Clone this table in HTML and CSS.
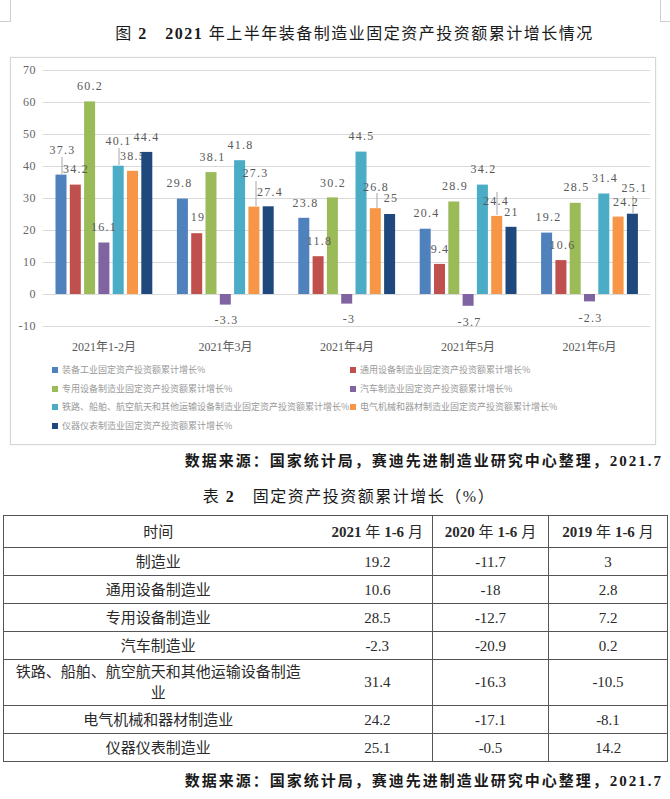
FILE: index.html
```html
<!DOCTYPE html>
<html lang="zh-CN">
<head>
<meta charset="utf-8">
<title>2021年上半年装备制造业固定资产投资额累计增长情况</title>
<link rel="stylesheet" href="styles.css">
</head>
<body>
<div class="marks"><span class="mark-l"></span><span class="mark-r"></span></div>
<h1 class="fig-title">图 <b>2</b>　<b>2021</b> 年上半年装备制造业固定资产投资额累计增长情况</h1>

<div class="chart">
<svg class="plot" width="644" height="300" viewBox="11 58 644 300" xmlns="http://www.w3.org/2000/svg">
  <g class="grid">
    <line x1="43" x2="650" y1="70.5" y2="70.5"/>
    <line x1="43" x2="650" y1="102.5" y2="102.5"/>
    <line x1="43" x2="650" y1="134.5" y2="134.5"/>
    <line x1="43" x2="650" y1="166.5" y2="166.5"/>
    <line x1="43" x2="650" y1="198.5" y2="198.5"/>
    <line x1="43" x2="650" y1="230.5" y2="230.5"/>
    <line x1="43" x2="650" y1="262.5" y2="262.5"/>
    <line x1="43" x2="650" y1="294.5" y2="294.5"/>
    <line x1="43" x2="650" y1="326.5" y2="326.5"/>
  </g>
  <g class="ylab">
    <text x="36" y="70">70</text>
    <text x="36" y="102">60</text>
    <text x="36" y="134">50</text>
    <text x="36" y="166">40</text>
    <text x="36" y="198">30</text>
    <text x="36" y="230">20</text>
    <text x="36" y="262">10</text>
    <text x="36" y="294">0</text>
    <text x="36" y="326">-10</text>
  </g>
  <g class="bars">
    <rect class="s1" x="55.5" y="174.6" width="11" height="119.4"/>
    <rect class="s2" x="69.8" y="184.6" width="11" height="109.4"/>
    <rect class="s3" x="84.1" y="101.4" width="11" height="192.6"/>
    <rect class="s4" x="98.4" y="242.5" width="11" height="51.5"/>
    <rect class="s5" x="112.7" y="165.7" width="11" height="128.3"/>
    <rect class="s6" x="127.0" y="170.8" width="11" height="123.2"/>

    <rect class="s1" x="176.9" y="198.6" width="11" height="95.4"/>
    <rect class="s2" x="191.2" y="233.2" width="11" height="60.8"/>
    <rect class="s3" x="205.5" y="172.1" width="11" height="121.9"/>
    <rect class="s4" x="219.8" y="294" width="11" height="10.6"/>
    <rect class="s5" x="234.1" y="160.2" width="11" height="133.8"/>
    <rect class="s6" x="248.4" y="206.6" width="11" height="87.4"/>
    <rect class="s7" x="262.7" y="206.3" width="11" height="87.7"/>

    <rect class="s1" x="298.3" y="217.8" width="11" height="76.2"/>
    <rect class="s2" x="312.6" y="256.2" width="11" height="37.8"/>
    <rect class="s3" x="326.9" y="197.4" width="11" height="96.6"/>
    <rect class="s4" x="341.2" y="294" width="11" height="9.6"/>
    <rect class="s5" x="355.5" y="151.6" width="11" height="142.4"/>
    <rect class="s6" x="369.8" y="208.2" width="11" height="85.8"/>
    <rect class="s7" x="384.1" y="214" width="11" height="80"/>

    <rect class="s1" x="419.7" y="228.7" width="11" height="65.3"/>
    <rect class="s2" x="434.0" y="263.9" width="11" height="30.1"/>
    <rect class="s3" x="448.3" y="201.5" width="11" height="92.5"/>
    <rect class="s4" x="462.6" y="294" width="11" height="11.8"/>
    <rect class="s5" x="476.9" y="184.6" width="11" height="109.4"/>
    <rect class="s6" x="491.2" y="215.9" width="11" height="78.1"/>
    <rect class="s7" x="505.5" y="226.8" width="11" height="67.2"/>

    <rect class="s1" x="541.1" y="232.6" width="11" height="61.4"/>
    <rect class="s2" x="555.4" y="260.1" width="11" height="33.9"/>
    <rect class="s3" x="569.7" y="202.8" width="11" height="91.2"/>
    <rect class="s4" x="584.0" y="294" width="11" height="7.4"/>
    <rect class="s5" x="598.3" y="193.5" width="11" height="100.5"/>
    <rect class="s6" x="612.6" y="216.6" width="11" height="77.4"/>
    <rect class="s7" x="626.9" y="213.7" width="11" height="80.3"/>
  </g>
  <g class="leaders">
    <line x1="62" x2="62" y1="157" y2="174"/>
    <line x1="119" x2="119" y1="148" y2="165"/>
    <line x1="256" x2="256" y1="181" y2="206"/>
    <line x1="377" x2="377" y1="193" y2="208"/>
    <line x1="497" x2="497" y1="192" y2="215"/>
    <line x1="633" x2="633" y1="196" y2="213"/>
  </g>
  <g class="dlab">
    <text x="62.5" y="150">37.3</text>
    <text x="76" y="169">34.2</text>
    <text x="90" y="86">60.2</text>
    <text x="104" y="227">16.1</text>
    <text x="118.5" y="141">40.1</text>
    <text x="133" y="156">38.5</text>
    <text x="146.5" y="137">44.4</text>

    <text x="179.5" y="183">29.8</text>
    <text x="198" y="217">19</text>
    <text x="212.5" y="157">38.1</text>
    <text x="226.5" y="320">-3.3</text>
    <text x="240.5" y="145">41.8</text>
    <text x="255.5" y="173">27.3</text>
    <text x="270" y="192">27.4</text>

    <text x="305.5" y="203">23.8</text>
    <text x="319.5" y="241">11.8</text>
    <text x="333" y="183">30.2</text>
    <text x="349" y="319">-3</text>
    <text x="361.5" y="136">44.5</text>
    <text x="376" y="187">26.8</text>
    <text x="391" y="198">25</text>

    <text x="426.5" y="213">20.4</text>
    <text x="440" y="249">9.4</text>
    <text x="455" y="186">28.9</text>
    <text x="469.5" y="322">-3.7</text>
    <text x="483.5" y="169">34.2</text>
    <text x="496" y="201">24.4</text>
    <text x="511.5" y="212">21</text>

    <text x="548.5" y="217">19.2</text>
    <text x="562.5" y="245">10.6</text>
    <text x="576.5" y="187">28.5</text>
    <text x="590.5" y="318">-2.3</text>
    <text x="605" y="178">31.4</text>
    <text x="626" y="202">24.2</text>
    <text x="634.5" y="188">25.1</text>
  </g>
  <rect class="s7" x="141.3" y="151.9" width="11" height="142.1"/>
  <g class="xlab">
    <text x="104" y="347">2021年1-2月</text>
    <text x="225.5" y="347">2021年3月</text>
    <text x="347" y="347">2021年4月</text>
    <text x="468" y="347">2021年5月</text>
    <text x="589.5" y="347">2021年6月</text>
  </g>
</svg>
<div class="legend">
  <div class="legend-item"><span class="swatch s1"></span>装备工业固定资产投资额累计增长%</div>
  <div class="legend-item"><span class="swatch s2"></span>通用设备制造业固定资产投资额累计增长%</div>
  <div class="legend-item"><span class="swatch s3"></span>专用设备制造业固定资产投资额累计增长%</div>
  <div class="legend-item"><span class="swatch s4"></span>汽车制造业固定资产投资额累计增长%</div>
  <div class="legend-item"><span class="swatch s5"></span>铁路、船舶、航空航天和其他运输设备制造业固定资产投资额累计增长%</div>
  <div class="legend-item"><span class="swatch s6"></span>电气机械和器材制造业固定资产投资额累计增长%</div>
  <div class="legend-item"><span class="swatch s7"></span>仪器仪表制造业固定资产投资额累计增长%</div>
</div>
</div>

<p class="source">数据来源：国家统计局，赛迪先进制造业研究中心整理，<span class="num">2021.7</span></p>

<h2 class="table-title">表 <b>2</b>　固定资产投资额累计增长（%）</h2>

<table class="data">
  <colgroup>
    <col class="col-name">
    <col class="col-a">
    <col class="col-b">
    <col class="col-c">
  </colgroup>
  <thead>
    <tr>
      <th>时间</th>
      <th><b>2021</b> 年 <b>1-6</b> 月</th>
      <th><b>2020</b> 年 <b>1-6</b> 月</th>
      <th><b>2019</b> 年 <b>1-6</b> 月</th>
    </tr>
  </thead>
  <tbody>
    <tr><td>制造业</td><td>19.2</td><td>-11.7</td><td>3</td></tr>
    <tr><td>通用设备制造业</td><td>10.6</td><td>-18</td><td>2.8</td></tr>
    <tr><td>专用设备制造业</td><td>28.5</td><td>-12.7</td><td>7.2</td></tr>
    <tr><td>汽车制造业</td><td>-2.3</td><td>-20.9</td><td>0.2</td></tr>
    <tr class="tall"><td>铁路、船舶、航空航天和其他运输设备制造业</td><td>31.4</td><td>-16.3</td><td>-10.5</td></tr>
    <tr><td>电气机械和器材制造业</td><td>24.2</td><td>-17.1</td><td>-8.1</td></tr>
    <tr><td>仪器仪表制造业</td><td>25.1</td><td>-0.5</td><td>14.2</td></tr>
  </tbody>
</table>

<p class="source">数据来源：国家统计局，赛迪先进制造业研究中心整理，<span class="num">2021.7</span></p>
</body>
</html>
```
FILE: styles.css
```css
body {
  margin: 0;
  width: 670px;
  background: #ffffff;
  color: #222222;
  font-family: "Liberation Serif", "Noto Sans CJK SC", serif;
}

.marks {
  display: flex;
  justify-content: space-between;
  height: 22px;
}
.mark-l,
.mark-r {
  display: block;
  width: 11px;
  height: 22px;
  box-sizing: border-box;
  border-bottom: 1px solid #cfcfcf;
}
.mark-l { border-right: 1px solid #cfcfcf; }
.mark-r { width: 10px; border-left: 1px solid #cfcfcf; }

.fig-title {
  margin: 0;
  padding-left: 39px;
  text-align: center;
  font-size: 16px;
  line-height: 24px;
  font-weight: normal;
  letter-spacing: 1.5px;
  color: #1a1a1a;
}

.chart {
  margin: 11px 0 0 10px;
  width: 646px;
  height: 388px;
  box-sizing: border-box;
  border: 1px solid #d6d6d6;
  box-shadow: 0 0 2px rgba(0, 0, 0, 0.08);
}
.plot { display: block; }
.grid line { stroke: #d9d9d9; stroke-width: 1; }
.leaders line { stroke: #a6a6a6; stroke-width: 1; }
.ylab text {
  font-family: "Liberation Serif", serif;
  font-size: 12px;
  fill: #666666;
  text-anchor: end;
  dominant-baseline: central;
  letter-spacing: 0.5px;
}
.dlab text {
  font-family: "Liberation Serif", serif;
  font-size: 12px;
  fill: #595959;
  text-anchor: middle;
  dominant-baseline: central;
  letter-spacing: 1.2px;
}
.xlab text {
  font-family: "Liberation Serif", "Noto Sans CJK SC", serif;
  font-size: 12px;
  fill: #595959;
  text-anchor: middle;
  dominant-baseline: central;
}

.s1 { fill: #4f81bd; background: #4f81bd; }
.s2 { fill: #c0504d; background: #c0504d; }
.s3 { fill: #9bbb59; background: #9bbb59; }
.s4 { fill: #8064a2; background: #8064a2; }
.s5 { fill: #4bacc6; background: #4bacc6; }
.s6 { fill: #f79646; background: #f79646; }
.s7 { fill: #1f497d; background: #1f497d; }

.legend {
  display: grid;
  grid-template-columns: 298px auto;
  margin-top: 3px;
  padding-left: 41px;
  font-family: "Noto Sans CJK SC", sans-serif;
  font-size: 9px;
  line-height: 18.5px;
  color: #999999;
}
.legend-item {
  display: flex;
  align-items: center;
  gap: 4px;
  white-space: nowrap;
}
.swatch {
  display: block;
  width: 6px;
  height: 6px;
  flex: none;
}

.source {
  margin: 6px 0 0 0;
  padding-right: 7px;
  text-align: right;
  font-size: 15px;
  line-height: 20px;
  font-weight: bold;
  letter-spacing: 2px;
  color: #1a1a1a;
}

.table-title {
  margin: 14px 0 0 0;
  padding-left: 28px;
  text-align: center;
  font-size: 16px;
  line-height: 24px;
  font-weight: normal;
  letter-spacing: 1.5px;
  color: #1a1a1a;
}

.data {
  margin: 6px 0 0 3px;
  width: 664px;
  border-collapse: collapse;
  table-layout: fixed;
  font-size: 15px;
  color: #2a2a2a;
}
.col-name { width: 319px; }
.col-a { width: 110px; }
.col-b { width: 116px; }
.col-c { width: 119px; }

.data th,
.data td {
  border: 1px solid #555555;
  padding: 0;
  height: 27px;
  text-align: center;
  font-weight: normal;
  line-height: 20px;
}
.data th { height: 31px; }
.data th:first-child,
.data td:first-child {
  border-right: none;
  padding: 0 18px 0 8px;
}
.data th:nth-child(2),
.data td:nth-child(2) {
  border-left: none;
}
.data .tall td {
  height: 45px;
  line-height: 21px;
}

.data + .source { margin-top: 9px; }
```
